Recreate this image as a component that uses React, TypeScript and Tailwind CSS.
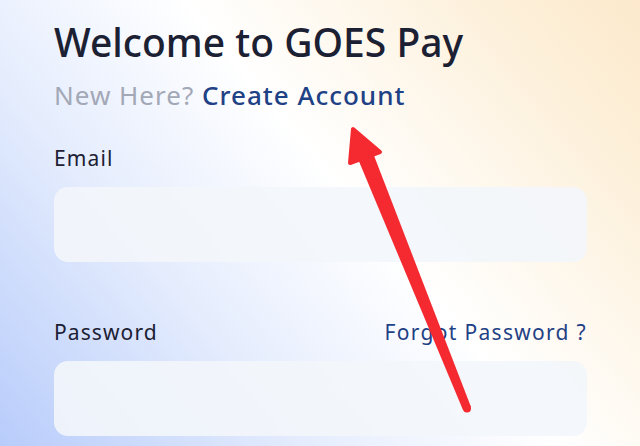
export default function App() {
  return (
    <div className="relative w-[640px] h-[446px] overflow-hidden bg-[linear-gradient(50deg,#b8ccfb_0%,#e4ecfd_30%,#ffffff_55%,#fdf0da_85%,#fce9cc_100%)] font-['Noto_Sans',sans-serif]">
      <div className="pl-[54px] pr-[54px] pt-[19px]">
        <h1 className="text-[39px] leading-[46px] font-medium text-[#1c2033]">
          Welcome to GOES Pay
        </h1>
        <p className="mt-[14px] text-[26px] leading-[32px] tracking-[1px]">
          <span className="text-[#a3a8b6]">New Here? </span>
          <span className="text-[#1f4185] font-medium">Create Account</span>
        </p>

        <label className="block mt-[34px] text-[21px] leading-[26px] tracking-[1.1px] text-[#1c2033]">
          Email
        </label>
        <div className="mt-[16px] w-[533px] h-[75px] rounded-[14px] bg-[#f3f6fb]/90" />

        <div className="mt-[57px] w-[533px] flex items-center justify-between">
          <span className="text-[21px] leading-[26px] tracking-[1.1px] text-[#1c2033]">Password</span>
          <span className="text-[21px] leading-[26px] tracking-[1.3px] text-[#1f4185]">Forgot Password ?</span>
        </div>
        <div className="mt-[16px] w-[533px] h-[75px] rounded-[14px] bg-[#f3f6fb]/90" />
      </div>

      <svg className="absolute inset-0" width="640" height="446" viewBox="0 0 640 446">
        <polygon
          points="353,129 350,163 380,152"
          fill="#f42a30"
          stroke="#f42a30"
          strokeWidth="4"
          strokeLinejoin="round"
        />
        <polygon points="358,159 373,153 471,407 463,410" fill="#f42a30" />
        <circle cx="467" cy="408.5" r="4" fill="#f42a30" />
      </svg>
    </div>
  );
}
